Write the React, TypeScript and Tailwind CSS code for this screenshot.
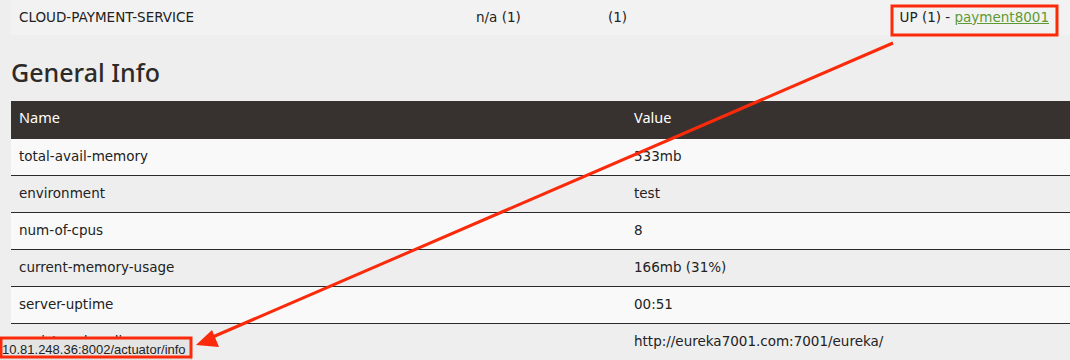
import React from "react";

const rows: [string, string][] = [
  ["total-avail-memory", "533mb"],
  ["environment", "test"],
  ["num-of-cpus", "8"],
  ["current-memory-usage", "166mb (31%)"],
  ["server-uptime", "00:51"],
  ["registered-replicas", "http://eureka7001.com:7001/eureka/"],
];

const body = { fontFamily: '"DejaVu Sans", "Noto Sans", sans-serif' };
const head = { fontFamily: '"Noto Sans", "Open Sans", sans-serif' };

export default function App() {
  return (
    <div className="relative w-[1070px] h-[360px] overflow-hidden bg-[#eeeeee] text-[#222]" style={body}>
      <div className="ml-[11px]">
        <div className="flex items-center h-[35px] pb-[1px] bg-[#f2f2f2] text-[13.5px]">
          <div className="w-[465px] pl-[8px]">CLOUD-PAYMENT-SERVICE</div>
          <div className="w-[132px]">n/a (1)</div>
          <div className="w-[100px]">(1)</div>
          <div className="flex-1 text-right pr-[21px]">
            UP (1) - <span className="text-[#5e9a34] underline">payment8001</span>
          </div>
        </div>
        <h2 className="mt-[20px] h-[46px] text-[25px] font-medium leading-[34px] text-[#2d2a27]" style={head}>
          General Info
        </h2>
        <div className="flex items-center h-[38px] pb-[4px] bg-[#37322f] text-white text-[14.5px]" style={head}>
          <div className="w-[615px] pl-[8px]">Name</div>
          <div className="flex-1 pl-[8px]">Value</div>
        </div>
        {rows.map(([n, v], i) => (
          <div
            key={n}
            className={
              "flex items-center h-[37px] pb-[1px] border-b border-[#2a2a2a] text-[13.5px] " +
              (i % 2 === 0 ? "bg-[#f9f9f9]" : "bg-[#eeeeee]")
            }
          >
            <div className="w-[615px] pl-[8px]">{n}</div>
            <div className="flex-1 pl-[8px]">{v}</div>
          </div>
        ))}
      </div>

      <div
        className="absolute left-0 bottom-0 h-[22px] w-[192px] bg-[#e4e4e4] border-t border-r border-[#c8c8c8] text-[13px] leading-[21px] pl-[2px] text-[#222] whitespace-nowrap"
        style={{ fontFamily: '"Liberation Sans", Arial, sans-serif' }}
      >
        10.81.248.36:8002/actuator/info
      </div>

      <svg className="absolute inset-0 pointer-events-none" width="1070" height="360" viewBox="0 0 1070 360">
        <rect x="892" y="6" width="165" height="29" fill="none" stroke="#fb2a0a" strokeWidth="3" />
        <rect x="1" y="338" width="190" height="19" fill="none" stroke="#fb2a0a" strokeWidth="3" />
        <line x1="893" y1="43" x2="208" y2="339" stroke="#fb2a0a" strokeWidth="3" />
        <polygon points="196,345 212,330 219,347" fill="#fb2a0a" />
      </svg>
    </div>
  );
}
